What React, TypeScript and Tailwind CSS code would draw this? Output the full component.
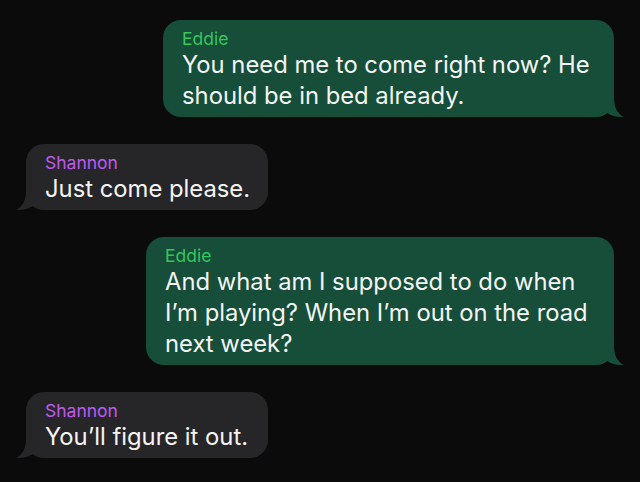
import React from "react";

function TailRight({ color }: { color: string }) {
  return (
    <svg className="absolute bottom-0 right-[-10px]" width="30" height="24" viewBox="0 0 30 24">
      <path d="M10 0 L20 0 L20 5 C20 14 23 20 29.5 24 C24 24.5 18 23 13 20 C10 22.5 5 24 0 24 L0 0 Z" fill={color} />
    </svg>
  );
}

function TailLeft({ color }: { color: string }) {
  return (
    <svg className="absolute bottom-0 left-[-10px]" width="30" height="24" viewBox="0 0 30 24">
      <path d="M20 0 L10 0 L10 5 C10 14 7 20 0.5 24 C6 24.5 12 23 17 20 C20 22.5 25 24 30 24 L30 0 Z" fill={color} />
    </svg>
  );
}

type Msg = { me: boolean; name: string; lines: string[]; w: string };

const msgs: Msg[] = [
  { me: true, name: "Eddie", lines: ["You need me to come right now? He", "should be in bed already."], w: "w-[451px]" },
  { me: false, name: "Shannon", lines: ["Just come please."], w: "w-[242px]" },
  { me: true, name: "Eddie", lines: ["And what am I supposed to do when", "I\u2019m playing? When I\u2019m out on the road", "next week?"], w: "w-[468px]" },
  { me: false, name: "Shannon", lines: ["You\u2019ll figure it out."], w: "w-[242px]" },
];

export default function App() {
  return (
    <div
      className="w-[640px] h-[482px] bg-[#0b0b0b] overflow-hidden flex flex-col gap-[27px] pt-[20px] px-[26px]"
      style={{ fontFamily: "Inter, 'Noto Sans', sans-serif" }}
    >
      {msgs.map((m, i) => {
        const color = m.me ? "#164e39" : "#262628";
        return (
          <div key={i} className={m.me ? "flex justify-end" : "flex justify-start"}>
            <div
              className={
                "relative rounded-[18px] pt-[8px] pb-[6px] px-[19px] " +
                m.w +
                (m.me ? " bg-[#164e39]" : " bg-[#262628]")
              }
            >
              {m.me ? <TailRight color={color} /> : <TailLeft color={color} />}
              <div
                className={
                  "relative text-[17.5px] leading-[21px] " + (m.me ? "text-[#34c759]" : "text-[#bf5af2]")
                }
              >
                {m.name}
              </div>
              <div className="relative text-[23.8px] leading-[31px] text-[#f4f4f4] whitespace-nowrap">
                {m.lines.map((l, j) => (
                  <div key={j}>{l}</div>
                ))}
              </div>
            </div>
          </div>
        );
      })}
    </div>
  );
}
